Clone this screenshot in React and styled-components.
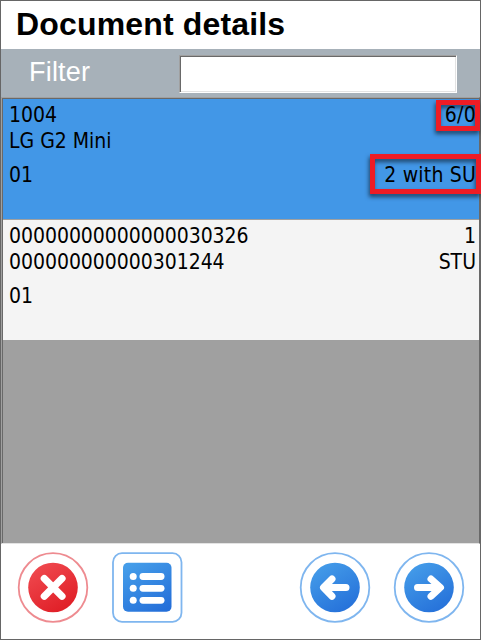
import React from "react";
import styled, { createGlobalStyle } from "styled-components";

const Global = createGlobalStyle`
  * { box-sizing: border-box; }
  body { margin: 0; background: #fff; overflow: hidden; }
`;

const Screen = styled.main`
  width: 481px;
  height: 640px;
  display: flex;
  flex-direction: column;
  border: 1px solid #666;
  background: #fff;
`;

const Title = styled.h1`
  margin: 0;
  height: 48px;
  flex: none;
  padding-left: 15px;
  font: bold 32px/46px "Liberation Sans", Arial, sans-serif;
  letter-spacing: 0.16px;
  color: #000;
`;

const FilterBar = styled.div`
  height: 48px;
  flex: none;
  display: flex;
  align-items: flex-start;
  background: #a7b1b9;
`;

const FilterLabel = styled.label`
  width: 178px;
  padding-left: 28px;
  font: 27px/47px "Liberation Sans", Arial, sans-serif;
  letter-spacing: 0.2px;
  color: #fff;
`;

const FilterInput = styled.input`
  width: 278px;
  height: 38px;
  margin-top: 6px;
  padding: 0 6px;
  border: 1px solid;
  border-color: #a0a0a0 #fff #fff #a0a0a0;
  border-radius: 0;
  box-shadow: inset 1px 1px #696969, inset -1px -1px #e3e3e3;
  background: #fff;
  font: 22px "Liberation Sans", Arial, sans-serif;
  outline: none;
`;

const List = styled.section`
  height: 447px;
  flex: none;
  border: 1px solid;
  border-color: #a0a0a0 #696969 #e3e3e3 #a0a0a0;
  background: #a0a0a0;
`;

const ListInner = styled.div`
  height: 100%;
  border-top: 1px solid #696969;
  border-left: 1px solid #696969;
`;

const Item = styled.article`
  height: 121px;
  padding: 3px 3px 0 6px;
  border-bottom: 1px solid #a0a0a0;
  background: ${({ $selected }) => ($selected ? "#4297e7" : "#f4f4f4")};
  font: 21px/26px "DejaVu Sans Condensed", "DejaVu Sans", Tahoma, sans-serif;
  font-stretch: condensed;
  color: #000;
`;

const Line = styled.div`
  height: 26px;
  display: flex;
  justify-content: space-between;
  margin-top: ${({ $gap }) => $gap || 0}px;
`;

const Text = styled.span`
  position: relative;
  white-space: nowrap;
  letter-spacing: ${({ $spacing }) => $spacing || 0}px;
`;

const Marker = styled.span`
  position: absolute;
  top: ${({ $top }) => $top}px;
  right: ${({ $right }) => $right}px;
  width: ${({ $width }) => $width}px;
  height: ${({ $height }) => $height}px;
  border: 5px solid #ee1c25;
  filter: drop-shadow(-1px 3px 2px rgba(0, 0, 0, 0.55));
`;

const Toolbar = styled.nav`
  flex: 1;
  display: flex;
  align-items: flex-start;
  padding: 8px 0 0 16px;
`;

const IconButton = styled.button`
  width: 72px;
  height: 72px;
  margin: 0 ${({ $after }) => $after || 0}px 0 0;
  padding: 0;
  border: 0;
  background: none;
  flex: none;
  svg { display: block; }
`;

const Gradient = ({ id, from, to }) => (
  <linearGradient id={id} x1="0.2" y1="0" x2="0.8" y2="1">
    <stop offset="0" stopColor={from} />
    <stop offset="1" stopColor={to} />
  </linearGradient>
);

function RoundIcon({ id, red, children }) {
  return (
    <svg width="72" height="72" viewBox="0 0 72 72" fill="none">
      <defs>
        <Gradient id={id} from={red ? "#f04a50" : "#459de9"} to={red ? "#df1c24" : "#246fd9"} />
      </defs>
      <circle cx="36" cy="35.5" r="34.3" stroke={red ? "#ee8b90" : "#7fb6ef"} strokeWidth="1.8" />
      <circle cx="36" cy="35.5" r="24.8" fill={`url(#${id})`} />
      {children}
    </svg>
  );
}

const ListIcon = () => (
  <svg width="72" height="72" viewBox="0 0 72 72" fill="none">
    <defs><Gradient id="list" from="#459de9" to="#246fd9" /></defs>
    <rect x="2" y="1.2" width="68.5" height="68.6" rx="9" stroke="#7fb6ef" strokeWidth="1.8" />
    <rect x="12" y="10.7" width="48.5" height="49" rx="5" fill="url(#list)" />
    <g fill="#fff">
      {[25, 36.8, 48.8].map((y) => (
        <g key={y} transform="translate(0 -.5)">
          <circle cx="22.2" cy={y} r="3.5" />
          <rect x="28.5" y={y - 3.4} width="25" height="6.8" rx="3.4" />
        </g>
      ))}
    </g>
  </svg>
);

export default function App() {
  return (
    <>
      <Global />
      <Screen>
        <Title>Document details</Title>
        <FilterBar>
          <FilterLabel htmlFor="filter">Filter</FilterLabel>
          <FilterInput id="filter" />
        </FilterBar>
        <List>
          <ListInner>
            <Item $selected>
              <Line>
                <Text>1004</Text>
                <Text $spacing={0.3}>6/0<Marker $top={-2} $right={-4} $width={44} $height={31} /></Text>
              </Line>
              <Line><Text>LG G2 Mini</Text></Line>
              <Line $gap={8}>
                <Text>01</Text>
                <Text $spacing={0.2}>2 with SU<Marker $top={-8} $right={-5} $width={111} $height={40} /></Text>
              </Line>
            </Item>
            <Item>
              <Line><Text $spacing={-0.04}>00000000000000030326</Text><Text>1</Text></Line>
              <Line><Text $spacing={-0.04}>000000000000301244</Text><Text>STU</Text></Line>
              <Line $gap={8}><Text>01</Text></Line>
            </Item>
          </ListInner>
        </List>
        <Toolbar>
          <IconButton aria-label="Cancel" $after={22}>
            <RoundIcon id="cancel" red>
              <path d="M27.3 26.5 45 44.2M45 26.5 27.3 44.2" stroke="#fff" strokeWidth="7.2" strokeLinecap="round" />
            </RoundIcon>
          </IconButton>
          <IconButton aria-label="List" $after={116}><ListIcon /></IconButton>
          <IconButton aria-label="Previous" $after={22}>
            <RoundIcon id="previous">
              <path d="M33 27 24.5 35.5 33 44.3M25 35.5H47" stroke="#fff" strokeWidth="7" strokeLinecap="round" strokeLinejoin="round" />
            </RoundIcon>
          </IconButton>
          <IconButton aria-label="Next">
            <RoundIcon id="next">
              <path d="M38 27 47.5 35.5 38 44.3M47 35.5H24.5" stroke="#fff" strokeWidth="7" strokeLinecap="round" strokeLinejoin="round" />
            </RoundIcon>
          </IconButton>
        </Toolbar>
      </Screen>
    </>
  );
}
